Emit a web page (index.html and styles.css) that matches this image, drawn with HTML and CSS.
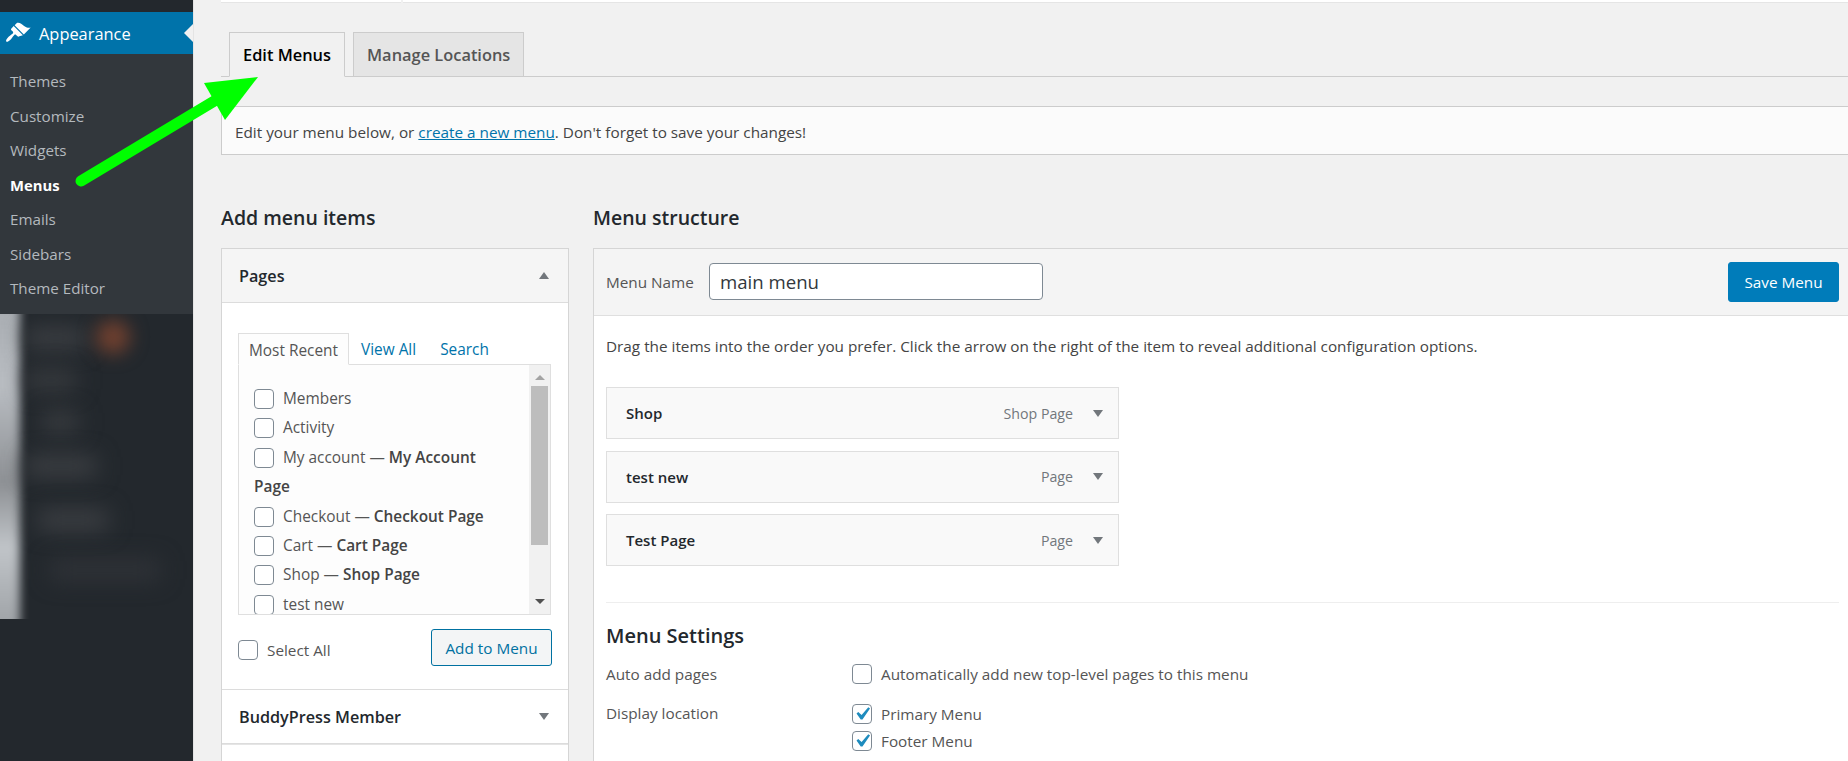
FILE: index.html
```html
<!DOCTYPE html>
<html lang="en">
<head>
<meta charset="utf-8">
<title>Menus</title>
<link rel="stylesheet" href="styles.css">
</head>
<body>
<div class="page">
  <aside class="sidebar">
    <div class="current">
      <svg class="brush" viewBox="0 0 20 20" width="26" height="26"><path fill="#fff" d="M14.48 11.06L7.41 3.99l1.5-1.5c.5-.56 2.3-.47 3.51.32 1.21.8 1.43 1.28 2.91 2.1 1.18.64 2.45 1.26 4.45.85zm-.71.71L6.7 4.7 4.93 6.47c-.39.39-.39 1.02 0 1.41l1.06 1.06c.39.39.39 1.03 0 1.42-.6.6-1.43 1.11-2.21 1.69-.35.26-.7.53-1.01.84-1.43 1.43-2.4 3.02-1.8 3.63.6.6 2.2-.37 3.63-1.8.31-.31.58-.66.84-1.01.58-.78 1.09-1.61 1.69-2.21.39-.39 1.03-.39 1.42 0l1.06 1.06c.39.39 1.02.39 1.41 0z"/></svg>
      <span class="current-label">Appearance</span>
    </div>
    <ul class="submenu">
      <li>Themes</li>
      <li>Customize</li>
      <li>Widgets</li>
      <li class="on">Menus</li>
      <li>Emails</li>
      <li>Sidebars</li>
      <li>Theme Editor</li>
    </ul>
    <div class="blurred">
      <div class="strip"></div>
      <div class="blob b1"></div>
      <div class="blob b2"></div>
      <div class="blob b3"></div>
      <div class="blob b4"></div>
      <div class="blob b5"></div>
      <div class="blob b6"></div>
      <div class="badge"></div>
    </div>
  </aside>

  <main class="main">
    <div class="topstrip"><div class="topcell one"></div><div class="topcell two"></div></div>
    <nav class="tabs">
      <a class="tab active">Edit Menus</a>
      <a class="tab">Manage Locations</a>
    </nav>
    <div class="notice">Edit your menu below, or <a class="link">create a new menu</a>. Don't forget to save your changes!</div>

    <div class="columns">
      <section class="left">
        <h2>Add menu items</h2>
        <div class="box">
          <div class="acc-head open"><span>Pages</span><i class="up"></i></div>
          <div class="acc-body">
            <div class="mini-tabs">
              <span class="mini active">Most Recent</span>
              <span class="mini">View All</span>
              <span class="mini">Search</span>
            </div>
            <div class="panel">
              <ul class="checks">
                <li><i class="cb"></i>Members</li>
                <li><i class="cb"></i>Activity</li>
                <li><i class="cb"></i>My account — <b>My Account</b> <b>Page</b></li>
                <li><i class="cb"></i>Checkout — <b>Checkout Page</b></li>
                <li><i class="cb"></i>Cart — <b>Cart Page</b></li>
                <li><i class="cb"></i>Shop — <b>Shop Page</b></li>
                <li><i class="cb"></i>test new</li>
              </ul>
              <div class="scrollbar">
                <i class="sb-up"></i>
                <div class="thumb"></div>
                <i class="sb-down"></i>
              </div>
            </div>
            <div class="add-row">
              <label class="select-all"><i class="cb"></i>Select All</label>
              <button class="btn-add">Add to Menu</button>
            </div>
          </div>
          <div class="acc-head"><span>BuddyPress Member</span><i class="down"></i></div>
          <div class="acc-rest"></div>
        </div>
      </section>

      <section class="right">
        <h2>Menu structure</h2>
        <div class="box box-right">
          <div class="menu-head">
            <label class="menu-label">Menu Name</label>
            <div class="menu-input">main menu</div>
            <button class="btn-save">Save Menu</button>
          </div>
          <div class="menu-body">
            <p class="drag">Drag the items into the order you prefer. Click the arrow on the right of the item to reveal additional configuration options.</p>
            <div class="items">
              <div class="item"><b>Shop</b><span class="type">Shop Page</span><i class="down"></i></div>
              <div class="item"><b>test new</b><span class="type">Page</span><i class="down"></i></div>
              <div class="item"><b>Test Page</b><span class="type">Page</span><i class="down"></i></div>
            </div>
            <hr class="rule">
            <h3>Menu Settings</h3>
            <div class="settings">
              <div class="s-label">Auto add pages</div>
              <div class="s-opts">
                <label class="s-opt"><i class="cb"></i>Automatically add new top-level pages to this menu</label>
              </div>
              <div class="s-label loc">Display location</div>
              <div class="s-opts loc">
                <label class="s-opt"><i class="cb"><svg class="tick" viewBox="0 0 20 20" width="26" height="26"><path fill="#1e8cbe" d="M14.83 4.89l1.34.94-5.81 8.38H9.02L5.78 9.67l1.34-1.25 2.57 2.4z"/></svg></i>Primary Menu</label>
                <label class="s-opt"><i class="cb"><svg class="tick" viewBox="0 0 20 20" width="26" height="26"><path fill="#1e8cbe" d="M14.83 4.89l1.34.94-5.81 8.38H9.02L5.78 9.67l1.34-1.25 2.57 2.4z"/></svg></i>Footer Menu</label>
              </div>
            </div>
          </div>
        </div>
      </section>
    </div>
  </main>

  <svg class="arrow" width="300" height="200" viewBox="0 0 300 200">
    <line x1="81" y1="181" x2="216" y2="100" stroke="#00ff00" stroke-width="11" stroke-linecap="round"/>
    <polygon points="204,83 258,77 225,120" fill="#00ff00"/>
  </svg>
</div>
</body>
</html>
```
FILE: styles.css
```css
* { box-sizing: border-box; }
html, body { margin: 0; padding: 0; }
body { font-family: "Open Sans", "Noto Sans", sans-serif; font-size: 15.3px; color: #444; background: #f1f1f1; }
.page { position: relative; display: flex; width: 1848px; height: 761px; overflow: hidden; }
ul { list-style: none; margin: 0; padding: 0; }

/* sidebar */
.sidebar { flex: 0 0 194px; background: #23282d; padding-top: 12px; display: flex; flex-direction: column; border-right: 1px solid #e4e4e4; }
.current { position: relative; height: 42px; background: #0073aa; color: #fff; display: flex; align-items: center; font-size: 16.4px; padding-left: 5px; gap: 8px; }
.current::after { content: ""; position: absolute; right: 0; top: 12px; border: 9px solid transparent; border-left: 0; border-right-color: #f1f1f1; }
.submenu { height: 260px; background: #32373c; padding-top: 10px; color: #b4b9be; font-size: 15.2px; }
.submenu li { height: 34.5px; line-height: 34.5px; padding-left: 10px; }
.submenu .on { color: #fff; font-weight: 700; font-size: 14.8px; }
.blurred { position: relative; height: 305px; overflow: hidden; background: #23282d; padding-top: 6px; }
.strip { position: absolute; left: -12px; top: -10px; width: 32px; height: 325px; filter: blur(5px); background: linear-gradient(#a8acb1, #b9bdc2 25%, #8d9094 55%, #c0c4c8 75%, #9da1a5); }
.blob { height: 20px; background: #3d4044; filter: blur(11px); margin-left: 26px; }
.b1 { width: 60px; margin-top: 8px; }
.b2 { width: 50px; margin-top: 22px; background: #383b3f; }
.b3 { width: 36px; margin-left: 42px; margin-top: 22px; background: #3a3d41; }
.b4 { width: 70px; margin-top: 24px; }
.b5 { width: 70px; margin-left: 38px; margin-top: 34px; }
.b6 { width: 110px; margin-left: 50px; margin-top: 30px; background: #303338; }
.badge { position: absolute; left: 96px; top: 6px; width: 34px; height: 34px; border-radius: 50%; background: #70402f; filter: blur(9px); }

/* main */
.main { flex: 1; min-width: 0; padding-left: 27px; }
.topstrip { display: flex; height: 3px; gap: 2px; }
.topcell { height: 3px; background: #fff; border-bottom: 1px solid #e5e5e5; }
.one { width: 180px; }
.two { flex: 1; }
.tabs { display: flex; gap: 8px; margin-top: 29px; height: 45px; padding-left: 8px; border-bottom: 1px solid #ccc; align-items: flex-end; }
.tab { height: 45px; margin-bottom: -1px; padding: 0 13px; line-height: 44px; border: 1px solid #ccc; background: #e5e5e5; color: #555; font-weight: 600; font-size: 16.4px; }
.tab.active { background: #f1f1f1; color: #000; border-bottom-color: #f1f1f1; }
.notice { margin-top: 29px; height: 49px; line-height: 44px; padding-top: 3px; background: #fbfbfb; border: 1px solid #ccc; border-width: 1px 0 1px 1px; padding-left: 13px; color: #444; font-size: 15.3px; }
.link { color: #0073aa; text-decoration: underline; }

.columns { display: flex; gap: 24px; }
h2 { margin: 49px 0 16px; font-size: 19.5px; line-height: 28px; font-weight: 600; color: #23282d; }
.left { flex: 0 0 348px; }
.right { flex: 1; min-width: 0; }
.box { background: #fff; border: 1px solid #d5d5d5; height: 520px; }
.box-right { border-right: 0; }
.acc-head { height: 54px; display: flex; align-items: center; justify-content: space-between; padding: 0 19px 0 17px; font-size: 16.2px; font-weight: 600; color: #23282d; border-bottom: 1px solid #dcdcdc; }
.acc-head.open { background: #f5f5f5; }
.up, .down { display: block; width: 0; height: 0; border: 5px solid transparent; border-top-width: 0; border-bottom: 7px solid #72777c; }
.down { border-bottom-width: 0; border-top: 7px solid #72777c; }
.acc-body { padding: 30px 16px 23px; border-bottom: 1px solid #dcdcdc; }
.mini-tabs { display: flex; height: 31px; font-size: 15.4px; line-height: 33px; color: #0073aa; }
.mini { padding: 0 12px; }
.mini.active { padding: 0 10px; width: 111px; height: 32px; white-space: nowrap; color: #555; background: #fdfdfd; border: 1px solid #dfdfdf; border-bottom-color: #fdfdfd; position: relative; z-index: 1; }
.panel { display: flex; height: 251px; width: 313px; background: #fdfdfd; border: 1px solid #dfdfdf; }
.checks { flex: 1; min-width: 0; height: 249px; overflow: hidden; padding: 19px 25px 0 15px; line-height: 29.4px; font-size: 15.4px; color: #555; }
.checks b { font-weight: 600; color: #444; }
.cb { display: inline-flex; align-items: center; justify-content: center; flex: none; width: 20px; height: 20px; margin-right: 9px; vertical-align: -5px; background: #fff; border: 1px solid #7e8993; border-radius: 4px; }
.tick { flex: none; }
.scrollbar { flex: 0 0 21px; background: #f1f1f1; display: flex; flex-direction: column; align-items: center; }
.sb-up { margin-top: 10px; width: 0; height: 0; border: 5px solid transparent; border-top-width: 0; border-bottom: 5px solid #a3a3a3; }
.thumb { width: 17px; height: 159px; margin-top: 6px; background: #bdbdbd; }
.sb-down { margin-top: 54px; width: 0; height: 0; border: 5px solid transparent; border-bottom-width: 0; border-top: 5px solid #505050; }
.add-row { display: flex; justify-content: space-between; align-items: flex-start; padding-top: 14px; }
.select-all { margin-top: 11px; display: flex; align-items: center; font-size: 15.3px; color: #555; }
.btn-add { width: 121px; height: 37px; padding: 0; font: inherit; font-size: 15.3px; color: #0071a1; background: #f3f5f6; border: 1px solid #0071a1; border-radius: 3px; }
.acc-rest { height: 20px; border-top: 1px solid #e5e5e5; }

.menu-head { height: 67px; display: flex; align-items: center; background: #f4f4f4; border-bottom: 1px solid #dfdfdf; padding: 0 9px 1px 12px; }
.menu-label { width: 103px; font-size: 15.3px; color: #555; }
.menu-input { width: 334px; height: 37px; line-height: 36px; padding-left: 10px; background: #fff; border: 1px solid #7e8993; border-radius: 4px; font-size: 18.6px; color: #32373c; }
.btn-save { margin-left: auto; width: 111px; height: 40px; padding: 0; font: inherit; font-size: 15.3px; color: #fff; background: #007cba; border: 1px solid #007cba; border-radius: 3px; }
.menu-body { padding: 0 9px 0 12px; }
.drag { margin: 16px 0 27px; line-height: 28px; font-size: 15.3px; color: #444; white-space: nowrap; }
.items { width: 513px; display: flex; flex-direction: column; gap: 11.7px; }
.item { height: 52px; display: flex; align-items: center; padding: 0 15px 0 19px; background: #f9f9f9; border: 1px solid #dfdfdf; font-size: 15px; color: #23282d; }
.item b { font-weight: 600; }
.type { margin-left: auto; margin-right: 20px; color: #72777c; font-size: 14.2px; }
.rule { margin: 36px 0 0; border: 0; border-top: 1px solid #eee; }
h3 { margin: 20px 0 0; font-size: 20px; line-height: 26px; font-weight: 600; color: #23282d; }
.settings { display: grid; grid-template-columns: 246px 1fr; margin-top: 15px; font-size: 15.3px; }
.s-label { line-height: 20px; color: #555; }
.s-opts { display: flex; flex-direction: column; gap: 7px; }
.s-opt { display: flex; align-items: center; height: 20px; color: #555; }
.s-label.loc { margin-top: 19px; }
.s-opts.loc { margin-top: 20px; }
.arrow { position: absolute; left: 0; top: 0; pointer-events: none; }
```
